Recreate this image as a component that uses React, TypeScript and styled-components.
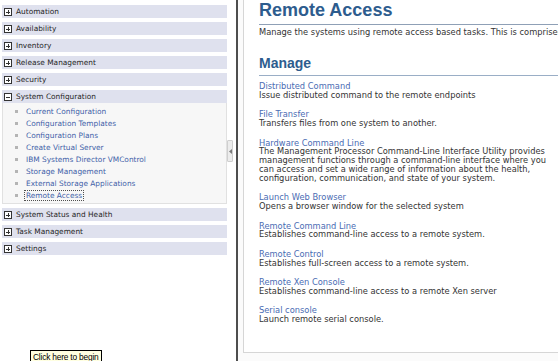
import React from "react";
import styled, { createGlobalStyle } from "styled-components";

const Global = createGlobalStyle`
  html, body { margin: 0; padding: 0; background: #ffffff; }
  body { width: 558px; height: 361px; overflow: hidden; font-family: "DejaVu Sans", Verdana, sans-serif; }
  #root { width: 558px; height: 361px; }
`;

const Page = styled.div`
  position: relative;
  display: flex;
  width: 558px;
  height: 361px;
  overflow: hidden;
`;

const LeftPane = styled.nav`
  width: 225px;
  padding: 5px 0 0 2px;
  display: flex;
  flex-direction: column;
  gap: 4px;
  flex-shrink: 0;
`;

const Group = styled.div`
  display: flex;
  flex-direction: column;
`;

const HeaderRow = styled.div`
  height: 13px;
  background: #dfe1ee;
  display: flex;
  align-items: center;
  gap: 4px;
  padding-left: 2px;
  font-size: 7.4px;
  color: #262626;
  white-space: nowrap;
`;

const SubPanel = styled.ul`
  margin: 0;
  padding: 2px 0 2px 0;
  list-style: none;
  background: #f7f7f7;
  border: 1px solid #e1e1e1;
  border-top: none;
`;

const SubItem = styled.li`
  height: 12px;
  display: flex;
  align-items: center;
  gap: 8px;
  padding-left: 12px;
  font-size: 7.4px;
  color: #3f5fa8;
  white-space: nowrap;
`;

const Bullet = styled.span`
  width: 3px;
  height: 3px;
  background: #b4b4b4;
  flex-shrink: 0;
`;

const ItemLabel = styled.span<{ $focused?: boolean }>`
  padding: 0 1px;
  margin-left: -1px;
  line-height: 9px;
  outline: ${(p) => (p.$focused ? "1px dotted #505050" : "none")};
`;

const Splitter = styled.div`
  width: 11px;
  flex-shrink: 0;
  display: flex;
  padding-top: 140px;
  box-sizing: border-box;
`;

const Handle = styled.div`
  width: 6px;
  height: 22px;
  box-sizing: border-box;
  border: 1px solid #cfcfcf;
  border-radius: 1px;
  background: #ececec;
  display: flex;
  align-items: center;
  justify-content: center;
`;

const SplitLine = styled.div`
  width: 2px;
  height: 361px;
  margin-left: 3px;
  margin-top: -140px;
  background: #4e4e4e;
`;

const RightPane = styled.main`
  flex: 1;
  min-width: 0;
  padding: 0 0 8px 5px;
  background: #fbfbfb;
  display: flex;
`;

const ContentBox = styled.section`
  flex: 1;
  min-width: 0;
  background: #ffffff;
  border: 1px solid #d6d6d6;
  border-top: none;
  border-right: none;
  padding-left: 15px;
  overflow: hidden;
`;

const Title = styled.h1`
  margin: 0;
  font-family: "Liberation Sans", Arial, sans-serif;
  font-weight: bold;
  font-size: 18px;
  line-height: 20px;
  color: #2d5c8e;
  padding: 0 0 4px 0;
  border-bottom: 1px solid #8fa0b6;
  white-space: nowrap;
`;

const Intro = styled.p`
  margin: 3px 0 0 0;
  font-size: 8.3px;
  line-height: 9px;
  color: #333333;
  white-space: nowrap;
  overflow: hidden;
`;

const SectionTitle = styled.h2`
  margin: 18px 0 0 0;
  font-family: "Liberation Sans", Arial, sans-serif;
  font-weight: bold;
  font-size: 14px;
  line-height: 16px;
  color: #2d5c8e;
  padding: 0 0 4px 0;
  border-bottom: 1px solid #9aaec6;
`;

const EntryList = styled.div`
  display: flex;
  flex-direction: column;
  gap: 10.7px;
  margin-top: 6px;
`;

const Entry = styled.div`
  font-size: 8.3px;
  line-height: 8.8px;
  white-space: nowrap;
`;

const EntryLink = styled.div`
  color: #4a6cb3;
`;

const EntryDesc = styled.div`
  color: #333333;
`;

const Tooltip = styled.div`
  position: absolute;
  left: 30px;
  top: 350px;
  height: 13px;
  padding: 0 2px;
  border: 1px solid #000000;
  background: #ffffe1;
  font-family: "Liberation Sans", Arial, sans-serif;
  font-size: 8.4px;
  line-height: 12px;
  color: #000000;
  white-space: nowrap;
  letter-spacing: -0.2px;
`;

const Toggle = ({ open }: { open?: boolean }) => (
  <svg width="8" height="8" viewBox="0 0 8 8" shapeRendering="crispEdges" style={{ flexShrink: 0 }}>
    <rect x="0.5" y="0.5" width="7" height="7" fill="#ffffff" stroke="#333333" />
    <line x1="2" y1="4" x2="6" y2="4" stroke="#333333" />
    {!open && <line x1="4" y1="2" x2="4" y2="6" stroke="#333333" />}
  </svg>
);

const headersTop = ["Automation", "Availability", "Inventory", "Release Management", "Security"];
const headersBottom = ["System Status and Health", "Task Management", "Settings"];
const subItems = [
  "Current Configuration",
  "Configuration Templates",
  "Configuration Plans",
  "Create Virtual Server",
  "IBM Systems Director VMControl",
  "Storage Management",
  "External Storage Applications",
  "Remote Access",
];

const entries: { title: string; lines: string[] }[] = [
  { title: "Distributed Command", lines: ["Issue distributed command to the remote endpoints"] },
  { title: "File Transfer", lines: ["Transfers files from one system to another."] },
  {
    title: "Hardware Command Line",
    lines: [
      "The Management Processor Command-Line Interface Utility provides",
      "management functions through a command-line interface where you",
      "can access and set a wide range of information about the health,",
      "configuration, communication, and state of your system.",
    ],
  },
  { title: "Launch Web Browser", lines: ["Opens a browser window for the selected system"] },
  { title: "Remote Command Line", lines: ["Establishes command-line access to a remote system."] },
  { title: "Remote Control", lines: ["Establishes full-screen access to a remote system."] },
  { title: "Remote Xen Console", lines: ["Establishes command-line access to a remote Xen server"] },
  { title: "Serial console", lines: ["Launch remote serial console."] },
];

export default function App() {
  return (
    <>
      <Global />
      <Page>
        <LeftPane>
          {headersTop.map((h) => (
            <HeaderRow key={h}>
              <Toggle />
              <span>{h}</span>
            </HeaderRow>
          ))}
          <Group>
            <HeaderRow>
              <Toggle open />
              <span>System Configuration</span>
            </HeaderRow>
            <SubPanel>
              {subItems.map((s) => (
                <SubItem key={s}>
                  <Bullet />
                  <ItemLabel $focused={s === "Remote Access"}>{s}</ItemLabel>
                </SubItem>
              ))}
            </SubPanel>
          </Group>
          {headersBottom.map((h) => (
            <HeaderRow key={h}>
              <Toggle />
              <span>{h}</span>
            </HeaderRow>
          ))}
        </LeftPane>
        <Splitter>
          <Handle>
            <svg width="3" height="5" viewBox="0 0 3 5">
              <path d="M3 0 L0 2.5 L3 5 Z" fill="#7a7a7a" />
            </svg>
          </Handle>
          <SplitLine />
        </Splitter>
        <RightPane>
          <ContentBox>
            <Title>Remote Access</Title>
            <Intro>Manage the systems using remote access based tasks. This is comprised of the following tasks.</Intro>
            <SectionTitle>Manage</SectionTitle>
            <EntryList>
              {entries.map((e) => (
                <Entry key={e.title}>
                  <EntryLink>{e.title}</EntryLink>
                  {e.lines.map((l) => (
                    <EntryDesc key={l}>{l}</EntryDesc>
                  ))}
                </Entry>
              ))}
            </EntryList>
          </ContentBox>
        </RightPane>
        <Tooltip>Click here to begin</Tooltip>
      </Page>
    </>
  );
}
